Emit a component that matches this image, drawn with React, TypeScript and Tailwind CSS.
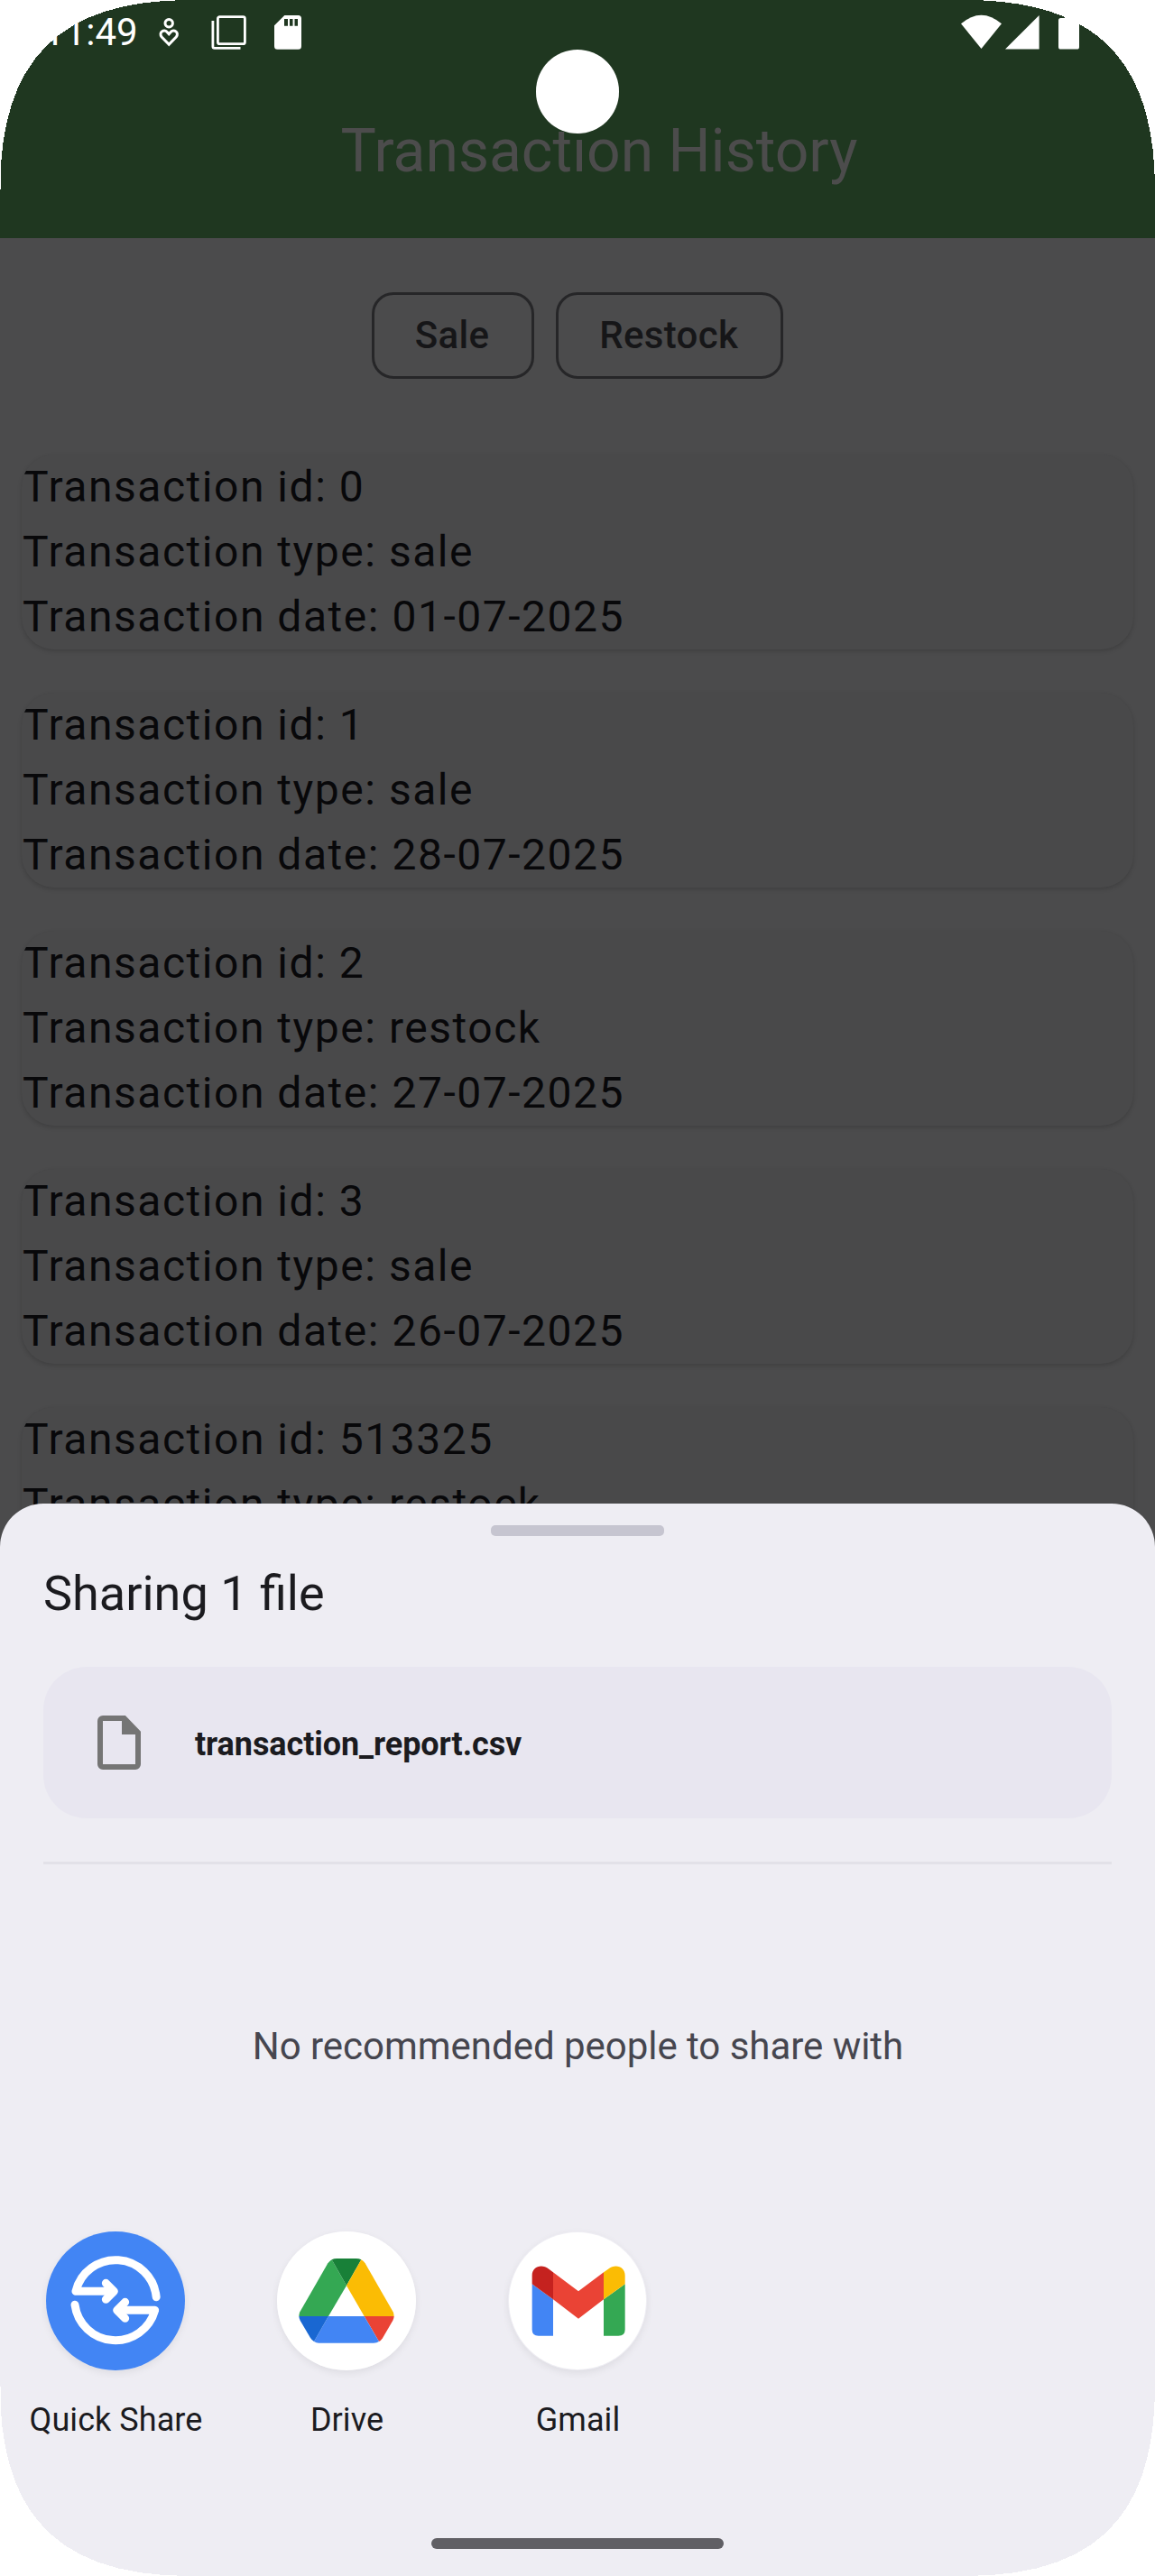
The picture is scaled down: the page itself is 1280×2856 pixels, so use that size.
import React from "react";

type Transaction = { id: number; type: string; date?: string };

const transactions: Transaction[] = [
  { id: 0, type: "sale", date: "01-07-2025" },
  { id: 1, type: "sale", date: "28-07-2025" },
  { id: 2, type: "restock", date: "27-07-2025" },
  { id: 3, type: "sale", date: "26-07-2025" },
  { id: 513325, type: "restock" },
];

function StatusBar() {
  return (
    <div className="flex h-[72px] items-start justify-between pt-[11px] pl-12 text-white">
      <div className="flex items-start">
        <span className="w-[128px] text-[42px] leading-[49px]">11:49</span>
        <svg className="mt-[9px] h-[33px] w-[23px]" viewBox="0 0 23 33" fill="none" stroke="currentColor" strokeWidth="3">
          <circle cx="11.2" cy="5.7" r="4.2" />
          <path d="M11.2 29.3 3.2 21C-.8 16 6 11.500 9.400 15.700L11.200 17.800 13 15.700C16.400 11.500 23.200 16 19.200 21Z" />
        </svg>
        <svg className="ml-[35px] mt-[6px] h-[39px] w-[39px]" viewBox="0 0 39 39" fill="none" stroke="currentColor" strokeWidth="2.800">
          <rect x="7.400" y="1.700" width="30" height="30" rx="2" />
          <path d="M1.900 6V34.500Q1.900 36.400 3.800 36.400H32.500" />
        </svg>
        <svg className="ml-[31px] mt-[6px] h-[38px] w-[30px]" viewBox="0 0 30 38" fill="currentColor">
          <path fillRule="evenodd" d="M11.300 0H26.500Q30 0 30 3.500V34.300Q30 37.800 26.500 37.800H3.500Q0 37.800 0 34.300V11.300ZM11 4V11.700H15V4ZM17 4V11.700H20.500V4ZM22.500 4V11.700H26V4Z" />
        </svg>
      </div>
      <svg className="mr-[84px] mt-[5px] h-[39px] w-[131px]" viewBox="1065 16 131 39" fill="currentColor">
        <path d="M1065 26.300Q1087.500 7 1110 26.300L1087.500 54Z" />
        <path d="M1151.600 17V54.600H1114Z" />
        <path d="M1180 17H1190V20H1193.500Q1196 20 1196 22.500V52Q1196 54.600 1193.500 54.600H1175.500Q1173 54.600 1173 52V22.500Q1173 20 1175.500 20H1180Z" />
      </svg>
    </div>
  );
}

function FilterButton({ label }: { label: string }) {
  return (
    <button className="h-24 rounded-[24px] border-[3px] border-[#262628] pr-[47px] pl-[45px] text-[42px] leading-[60px] font-medium tracking-[0.3px] text-[#161618]">
      {label}
    </button>
  );
}

function TransactionCard({ item }: { item: Transaction }) {
  return (
    <article className="h-[216px] overflow-hidden rounded-[36px] bg-[#49494a] pl-px text-[48px] leading-[72px] tracking-[1.530px] text-[#08080a] shadow-[0_2px_5px_rgba(0,0,0,0.16)]">
      <p>Transaction id: {item.id}</p>
      <p>Transaction type: {item.type}</p>
      {item.date && <p>Transaction date: {item.date}</p>}
    </article>
  );
}

function FileIcon() {
  return (
    <svg className="h-[60px] w-12" viewBox="0 0 16 20" fill="#757575">
      <path
        fillRule="evenodd"
        d="M2 0H10.300L16 5.900V18A2 2 0 0 1 14 20H2A2 2 0 0 1 0 18V2A2 2 0 0 1 2 0ZM2 2V18H14V7H9V2Z"
      />
    </svg>
  );
}

function QuickShareIcon() {
  return (
    <svg className="size-[154px]" viewBox="153 102 462 462">
      <circle cx="384" cy="333" r="231" fill="#4285f4" />
      <g fill="none" stroke="#fff" strokeWidth="27" strokeLinecap="round" strokeLinejoin="round">
        <path d="M519.500 320A136 136 0 0 0 252 301H375" />
        <path d="M352 274L379 301L352 328" />
        <path d="M249 346A136 136 0 0 0 515 364H393" />
        <path d="M416 337L389 364L416 391" />
      </g>
    </svg>
  );
}

function DriveIcon() {
  return (
    <svg className="size-[154px]" viewBox="81 102 462 462">
      <circle cx="312" cy="333" r="231" fill="#fff" />
      <path fill="#34a853" d="M263 196L312 282L252 384H154Q154 376 157 370L250 208Q256 200 263 196Z" />
      <path fill="#188038" d="M263 196Q270 192 280 192H344Q354 192 361 196L312 282Z" />
      <path fill="#fbbc04" d="M361 196Q369 200 374 208L467 370Q470 376 470 384H371L312 282Z" />
      <path fill="#ea4335" d="M371 384H470Q470 391 466 398L432 457Q427 465 420 468Z" />
      <path fill="#4285f4" d="M252 384H371L420 468Q413 473 402 473H220Q211 473 204 468Z" />
      <path fill="#1967d2" d="M154 384H252L204 468Q197 464 192 456L158 398Q154 391 154 384Z" />
    </svg>
  );
}

function GmailIcon() {
  return (
    <svg className="size-[154px]" viewBox="849 102 462 462">
      <circle cx="1080" cy="333" r="228" fill="#fff" />
      <path fill="#4285f4" d="M929 277L999 328V449H950Q929 449 929 428Z" />
      <path fill="#34a853" d="M1238 277L1167 328V449H1216Q1238 449 1238 428Z" />
      <path fill="#ea4335" d="M999 238L1083 301L1167 238V328L1083 392L999 328Z" />
      <path fill="#c5221f" d="M929 277V248C929 220 960 207 985 227L999 238V328Z" />
      <path fill="#fbbc04" d="M1238 277V248C1238 220 1207 207 1182 227L1167 238V328Z" />
    </svg>
  );
}

function ShareTarget({ label, icon }: { label: string; icon: React.ReactNode }) {
  return (
    <div className="flex w-64 flex-col items-center">
      <div className="rounded-full shadow-[0_3px_8px_rgba(0,0,0,0.07)]">{icon}</div>
      <span className="mt-[31px] pl-px text-[36px] leading-[48px] tracking-[0.060px] text-[#1b1b1f]">{label}</span>
    </div>
  );
}

function ShareSheet() {
  return (
    <section className="absolute inset-x-0 top-[1667px] bottom-0 flex flex-col rounded-t-[48px] bg-[#eeedf3] px-12 pt-6">
      <div className="h-3 w-48 shrink-0 self-center rounded-[5px] bg-[#c6c5d0]" />
      <h2 className="mt-[28px] text-[54px] leading-[72px] text-[#1b1b1f] [font-variant-ligatures:common-ligatures]">
        Sharing 1 file
      </h2>
      <div className="mt-[45px] flex h-[168px] shrink-0 items-center rounded-[48px] bg-[#e8e6f0] pl-[60px]">
        <FileIcon />
        <span className="ml-[60px] pt-[3px] text-[36px] leading-[48px] font-bold tracking-[-0.080px] text-[#1b1b1f]">
          transaction_report.csv
        </span>
      </div>
      <hr className="mt-12 h-[3px] shrink-0 border-0 bg-[#e2e1e8]" />
      <p className="mt-[172px] pl-px text-center text-[42px] leading-[60px] tracking-[-0.030px] text-[#46464f]">
        No recommended people to share with
      </p>
      <div className="-mx-12 mt-[175px] flex">
        <ShareTarget label="Quick Share" icon={<QuickShareIcon />} />
        <ShareTarget label="Drive" icon={<DriveIcon />} />
        <ShareTarget label="Gmail" icon={<GmailIcon />} />
      </div>
      <div className="mt-auto mb-[30px] h-3 w-[324px] self-center rounded-full bg-[#605f64]" />
    </section>
  );
}

function Corner({ className, edge }: { className: string; edge: number }) {
  return (
    <svg className={className} viewBox="0 0 211 211" fill="#fff" shapeRendering="crispEdges">
      <path d="M0 0H211C66 0 0 66 0 211Z" />
      <rect width="1" height={edge} />
    </svg>
  );
}

export default function App() {
  return (
    <div className="relative h-[2856px] w-[1280px] overflow-hidden bg-[#4b4b4c] font-[Roboto,sans-serif]">
      <header className="h-[264px] bg-[#1f3720]">
        <StatusBar />
        <div className="flex h-[192px] items-center justify-center pl-12">
          <h1 className="text-[66px] leading-[84px] text-[#4c4c4c]">Transaction History</h1>
        </div>
      </header>
      <div className="flex justify-center gap-6 pt-[60px]">
        <FilterButton label="Sale" />
        <FilterButton label="Restock" />
      </div>
      <main className="mt-[84px] flex flex-col gap-12 px-6">
        {transactions.map((item) => (
          <TransactionCard key={item.id} item={item} />
        ))}
      </main>
      <ShareSheet />
      <div className="absolute top-[55px] left-[594px] h-[93px] w-[92px] rounded-full bg-white" />
      <Corner edge={210} className="absolute top-0 left-0 size-[211px]" />
      <Corner edge={193} className="absolute top-0 right-0 size-[211px] -scale-x-100" />
      <Corner edge={193} className="absolute right-0 bottom-0 size-[211px] -scale-100" />
      <Corner edge={210} className="absolute bottom-0 left-0 size-[211px] -scale-y-100" />
    </div>
  );
}
